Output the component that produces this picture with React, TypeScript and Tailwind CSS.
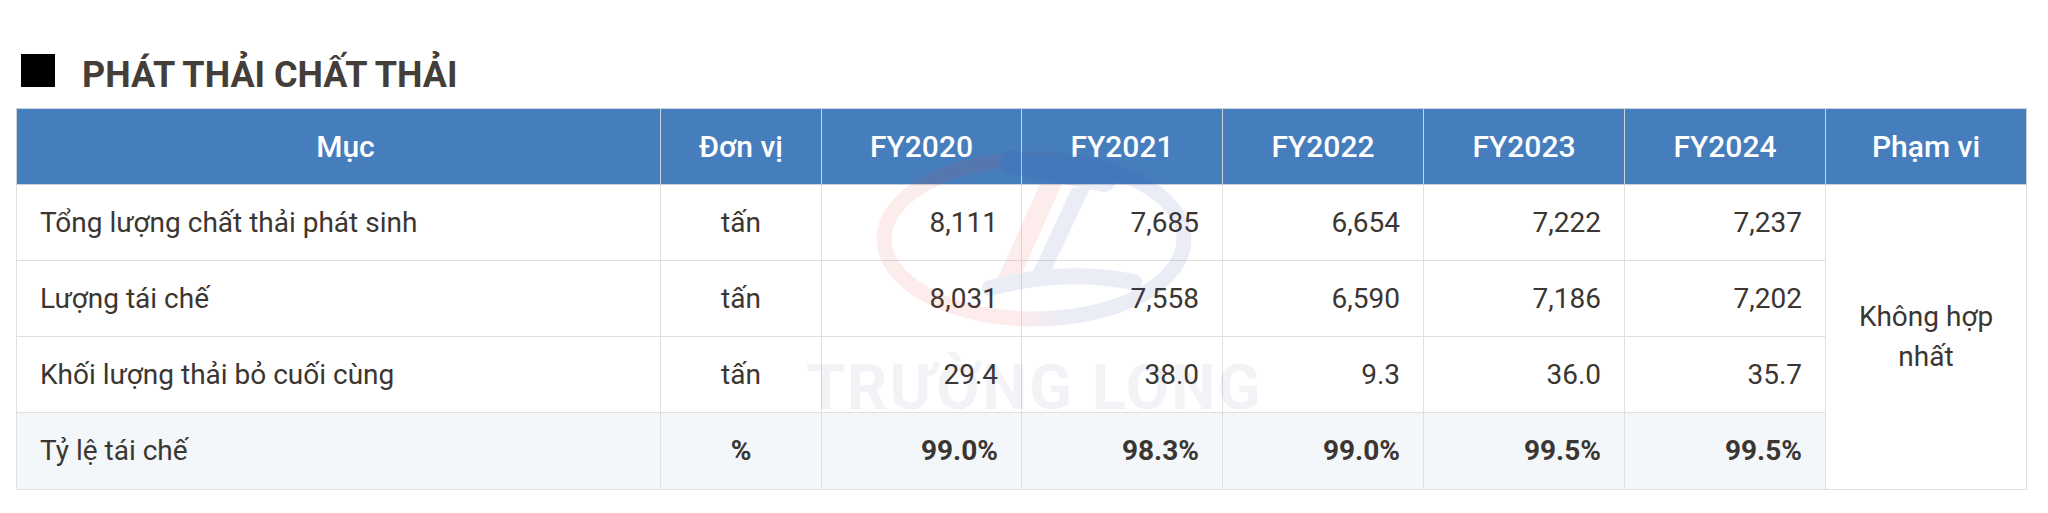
import React from "react";

const rows = [
  { label: "Tổng lượng chất thải phát sinh", unit: "tấn", vals: ["8,111", "7,685", "6,654", "7,222", "7,237"] },
  { label: "Lượng tái chế", unit: "tấn", vals: ["8,031", "7,558", "6,590", "7,186", "7,202"] },
  { label: "Khối lượng thải bỏ cuối cùng", unit: "tấn", vals: ["29.4", "38.0", "9.3", "36.0", "35.7"] },
];

const years = ["FY2020", "FY2021", "FY2022", "FY2023", "FY2024"];

function Watermark() {
  return (
    <div className="pointer-events-none absolute inset-0">
      <svg
        className="absolute left-[872px] top-[150px] opacity-[0.09]"
        width="324"
        height="178"
        viewBox="0 0 324 178"
      >
        <defs>
          <linearGradient id="ringGrad" x1="0" y1="0" x2="1" y2="0">
            <stop offset="0" stopColor="#e53935" />
            <stop offset="0.45" stopColor="#e53935" />
            <stop offset="0.6" stopColor="#303f9f" />
            <stop offset="1" stopColor="#303f9f" />
          </linearGradient>
        </defs>
        <ellipse cx="162" cy="89" rx="150" ry="80" fill="none" stroke="url(#ringGrad)" strokeWidth="15" />
        <path d="M140 12 L232 30" stroke="#303f9f" strokeWidth="24" strokeLinecap="round" fill="none" />
        <polygon points="168,34 190,34 146,132 124,132" fill="#e53935" />
        <polygon points="200,38 218,38 176,128 158,128" fill="#303f9f" />
        <path d="M118 138 Q190 118 262 132" stroke="#303f9f" strokeWidth="16" strokeLinecap="round" fill="none" />
      </svg>
      <div className="absolute left-[806px] top-[350px] font-['Roboto',sans-serif] text-[63px] font-bold leading-[76px] tracking-[2px] text-[rgba(40,50,110,0.06)]">
        TRƯỜNG LONG
      </div>
    </div>
  );
}

export default function App() {
  return (
    <div className="relative h-[513px] w-[2048px] bg-white font-['Roboto','Noto_Sans',sans-serif] text-[#3b3632]">
      <div className="flex items-start pl-[21px] pt-[54px]">
        <div className="h-[33px] w-[34px] bg-black" />
        <h2 className="ml-[27px] mt-[1px] text-[36px] font-bold leading-[40px] text-[#453d38]">
          PHÁT THẢI CHẤT THẢI
        </h2>
      </div>
      <div className="ml-[16px] mt-[13px]">
        <table className="w-[2010px] table-fixed border-collapse text-[28px]">
          <colgroup>
            <col className="w-[644px]" />
            <col className="w-[161px]" />
            <col className="w-[200px]" />
            <col className="w-[201px]" />
            <col className="w-[201px]" />
            <col className="w-[201px]" />
            <col className="w-[201px]" />
            <col className="w-[201px]" />
          </colgroup>
          <thead>
            <tr className="h-[76px] bg-[#467ebd] text-[30px] text-white">
              <th className="border border-[#c9d2dc] pl-[14px] text-center font-medium">Mục</th>
              <th className="border border-[#c9d2dc] text-center font-medium">Đơn vị</th>
              {years.map((y) => (
                <th key={y} className="border border-[#c9d2dc] text-center font-medium">
                  {y}
                </th>
              ))}
              <th className="border border-[#c9d2dc] text-center font-medium">Phạm vi</th>
            </tr>
          </thead>
          <tbody>
            {rows.map((r, i) => (
              <tr key={r.label} className="h-[76px]">
                <td className="border border-[#e0e0e0] px-[23px]">{r.label}</td>
                <td className="border border-[#e0e0e0] text-center">{r.unit}</td>
                {r.vals.map((v, j) => (
                  <td key={j} className="border border-[#e0e0e0] px-[23px] text-right">
                    {v}
                  </td>
                ))}
                {i === 0 && (
                  <td
                    rowSpan={4}
                    className="border border-[#e0e0e0] bg-white px-[23px] text-center align-middle leading-[40px]"
                  >
                    Không hợp nhất
                  </td>
                )}
              </tr>
            ))}
            <tr className="h-[77px] bg-[#f3f7fa]">
              <td className="border border-[#e0e0e0] px-[23px]">Tỷ lệ tái chế</td>
              <td className="border border-[#e0e0e0] text-center font-bold">%</td>
              {["99.0%", "98.3%", "99.0%", "99.5%", "99.5%"].map((v, j) => (
                <td key={j} className="border border-[#e0e0e0] px-[23px] text-right font-bold">
                  {v}
                </td>
              ))}
            </tr>
          </tbody>
        </table>
      </div>
      <Watermark />
    </div>
  );
}
